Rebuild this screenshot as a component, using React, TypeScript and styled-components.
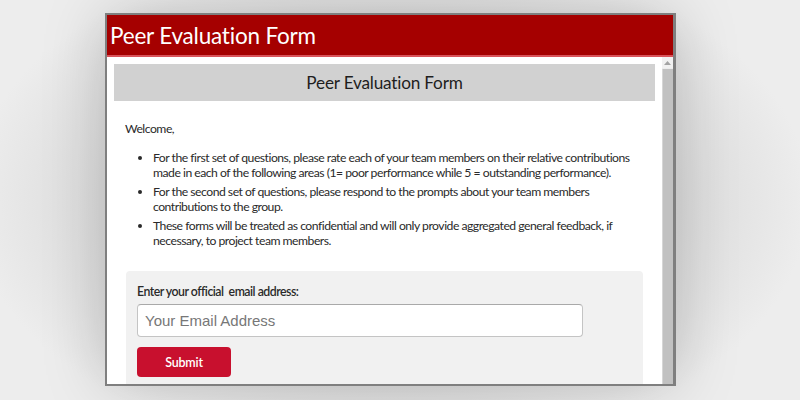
import React from "react";
import styled, { createGlobalStyle } from "styled-components";

const Global = createGlobalStyle`
  html, body { margin: 0; padding: 0; }
  body {
    width: 800px; height: 400px; overflow: hidden;
    background: #ededed;
    font-family: "Lato", "Noto Sans", sans-serif;
  }
`;

const Stage = styled.div`
  width: 800px;
  height: 400px;
  padding-top: 13px;
  padding-left: 105px;
  box-sizing: border-box;
  background: radial-gradient(ellipse 420px 260px at 390px 200px, #bdbdbd 0%, #d4d4d4 55%, #ededed 100%);
`;

const Window = styled.div`
  width: 571px;
  height: 373px;
  box-sizing: border-box;
  border: 2px solid #7f7f7f;
  border-right-width: 3px;
  background: #fff;
  display: flex;
  flex-direction: column;
  overflow: hidden;
  box-shadow: 0 0 60px rgba(0, 0, 0, 0.18);
`;

const Header = styled.div`
  height: 40px;
  background: #a50000;
  border-bottom: 2px solid #d9535a;
  color: #fff;
  font-size: 22.5px;
  letter-spacing: -0.2px;
  display: flex;
  align-items: center;
  padding-left: 3px;
  flex-shrink: 0;
`;

const Body = styled.div`
  flex: 1;
  display: flex;
  min-height: 0;
`;

const Content = styled.div`
  flex: 1;
  padding: 7px 5px 0 7px;
  min-width: 0;
`;

const TitleBar = styled.div`
  height: 37px;
  background: #d1d1d1;
  display: flex;
  align-items: center;
  justify-content: center;
  font-size: 17.2px;
  letter-spacing: -0.2px;
  color: #1e1e1e;
`;

const Intro = styled.div`
  padding: 0 11px;
  color: #2a2a2a;
  font-size: 12.2px;
  letter-spacing: -0.5px;
  line-height: 15px;
`;

const Welcome = styled.p`
  margin: 20px 0 0 0;
`;

const List = styled.ul`
  margin: 14px 0 0 0;
  padding-left: 28px;
  li { margin-bottom: 4px; }
`;

const FormBox = styled.div`
  margin: 23px 12px 0 12px;
  background: #f1f1f1;
  border-radius: 4px 4px 0 0;
  padding: 13px 11px 10px 11px;
`;

const Label = styled.label`
  display: block;
  font-size: 12.3px;
  letter-spacing: -0.5px;
  font-weight: 600;
  color: #2a2a2a;
  margin-bottom: 5px;
`;

const Input = styled.input`
  display: block;
  width: 446px;
  height: 33px;
  box-sizing: border-box;
  border: 1px solid #c4c4c4;
  border-top-color: #a9a9a9;
  border-radius: 4px;
  background: #fff;
  padding: 0 7px;
  font-family: "Liberation Sans", Arial, sans-serif;
  font-size: 15px;
  &::placeholder { color: #777; }
`;

const Button = styled.button`
  margin-top: 10px;
  width: 94px;
  height: 30px;
  border: none;
  border-radius: 4px;
  background: #c8102e;
  color: #fff;
  font-family: "Lato", "Noto Sans", sans-serif;
  font-size: 12.5px;
  font-weight: 600;
  letter-spacing: -0.2px;
`;

const Scrollbar = styled.div`
  width: 11px;
  margin-left: 2px;
  display: flex;
  flex-direction: column;
  background: #ececec;
  flex-shrink: 0;
`;

const Arrow = styled.div`
  height: 11px;
  display: flex;
  align-items: center;
  justify-content: center;
  background: #f1f1f1;
`;

const Thumb = styled.div`
  flex: 1;
  margin-top: 1px;
  background: #c1c1c1;
  border-left: 1px solid #d6d6d6;
`;

export default function App() {
  return (
    <>
      <Global />
      <Stage>
        <Window>
          <Header>Peer Evaluation Form</Header>
          <Body>
            <Content>
              <TitleBar>Peer Evaluation Form</TitleBar>
              <Intro>
                <Welcome>Welcome,</Welcome>
                <List>
                  <li>
                    For the first set of questions, please rate each of your team members on their relative contributions made in each of the following areas (1= poor performance while 5 = outstanding performance).
                  </li>
                  <li>
                    For the second set of questions, please respond to the prompts about your team members contributions to the group.
                  </li>
                  <li>
                    These forms will be treated as confidential and will only provide aggregated general feedback, if necessary, to project team members.
                  </li>
                </List>
              </Intro>
              <FormBox>
                <Label>Enter your official&nbsp; email address:</Label>
                <Input placeholder="Your Email Address" />
                <Button>Submit</Button>
              </FormBox>
            </Content>
            <Scrollbar>
              <Arrow>
                <svg width="7" height="4" viewBox="0 0 7 4">
                  <path d="M0 4 L3.5 0 L7 4 Z" fill="#a3a3a3" />
                </svg>
              </Arrow>
              <Thumb />
            </Scrollbar>
          </Body>
        </Window>
      </Stage>
    </>
  );
}
